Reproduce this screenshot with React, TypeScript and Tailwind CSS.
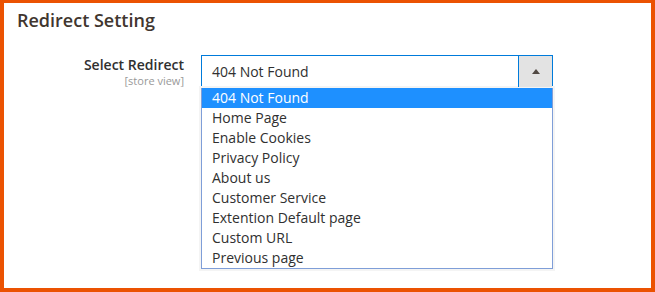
const options = [
  '404 Not Found',
  'Home Page',
  'Enable Cookies',
  'Privacy Policy',
  'About us',
  'Customer Service',
  'Extention Default page',
  'Custom URL',
  'Previous page',
];

export default function App() {
  const selected = options[0];

  return (
    <div
      className="w-[655px] h-[292px] bg-white border-4 border-t-[3px] border-[#eb5202] text-[#303030]"
      style={{ fontFamily: '"Open Sans", "Liberation Sans", sans-serif' }}
    >
      {/* Section title */}
      <h2 className="pl-[13px] pt-[6px] text-[18px] leading-[23px] font-semibold text-[#41362f]">
        Redirect Setting
      </h2>

      {/* Field row */}
      <div className="flex mt-[23px]">
        <div className="w-[180px] shrink-0 text-right pt-[1px]">
          <div className="text-[14px] leading-[18px] font-semibold text-[#303030]">Select Redirect</div>
          <div className="text-[11px] leading-[14px] text-[#999999]">[store view]</div>
        </div>

        <div className="ml-[17px] w-[352px]">
          {/* Select control */}
          <div className="flex h-[33px] border border-[#007bdb] bg-white">
            <div className="flex-1 flex items-center pl-[10px] text-[14px]">{selected}</div>
            <div className="w-[34px] flex items-center justify-center bg-[#e3e3e3] border-l border-[#007bdb]">
              <svg width="8" height="5" viewBox="0 0 8 5">
                <path d="M4 0 L8 5 L0 5 Z" fill="#514943" />
              </svg>
            </div>
          </div>

          {/* Open list */}
          <div className="border border-t-0 border-[#7f9ed8] bg-white shadow-[0_0_0_2px_#f4f4f4]">
            {options.map((opt) => (
              <div
                key={opt}
                className={`h-[20px] leading-[20px] pl-[10px] text-[14px] ${
                  opt === selected ? 'bg-[#1e90ff] text-white' : 'text-[#303030]'
                }`}
              >
                {opt}
              </div>
            ))}
          </div>
        </div>
      </div>
    </div>
  );
}
